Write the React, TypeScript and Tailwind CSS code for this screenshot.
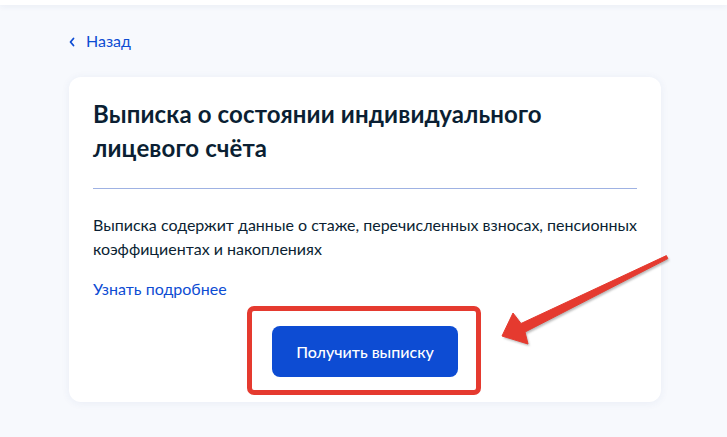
import React from "react";

export default function App() {
  const arrow =
    "502,336 513,313 521,323.5 666.4,255.6 667.8,258.6 525,332 528,344";
  return (
    <div
      className="relative w-[727px] h-[437px] overflow-hidden bg-[#f7f9fd] text-[#0b1f33]"
      style={{ fontFamily: "Lato, 'Noto Sans', sans-serif" }}
    >
      <div className="h-[5px] bg-white shadow-[0_1px_6px_rgba(40,60,120,0.08)]" />
      <div className="pl-[68px] pt-[24px]">
        <a className="flex items-center gap-[10px] text-[#0d4cd3] text-[16px] leading-[24px] h-[24px]">
          <svg width="8" height="10" viewBox="0 0 8 10" className="mt-[1px]">
            <path d="M5.5 1.5 L2.5 5 L5.5 8.5" fill="none" stroke="#0d4cd3" strokeWidth="1.8" strokeLinecap="round" strokeLinejoin="round" />
          </svg>
          <span>Назад</span>
        </a>
      </div>
      <div className="ml-[69px] mt-[24px] w-[592px] rounded-[12px] bg-white shadow-[0_1px_8px_rgba(40,70,140,0.07)] px-[24px] pt-[20px] pb-[25px]">
        <h1 className="text-[24px] leading-[34px] font-bold tracking-[0.13px]">
          Выписка о состоянии индивидуального
          <br />
          лицевого счёта
        </h1>
        <div className="mt-[23px] h-px bg-[#9fb2e3]" />
        <p className="mt-[24px] text-[16px] leading-[24px]">
          Выписка содержит данные о стаже, перечисленных взносах, пенсионных
          коэффициентах и накоплениях
        </p>
        <a className="block mt-[16px] text-[16px] leading-[24px] text-[#0d4cd3]">
          Узнать подробнее
        </a>
        <div className="mt-[25px] flex justify-center">
          <button className="w-[186px] h-[51px] rounded-[8px] bg-[#0d4cd3] text-white text-[16px] font-medium">
            Получить выписку
          </button>
        </div>
      </div>
      <div className="absolute left-[247px] top-[306px] w-[234px] h-[89px] border-[5px] border-[#e53a2f] rounded-[7px]" />
      <svg className="absolute left-0 top-0 pointer-events-none" width="727" height="437">
        <defs>
          <filter id="b" x="-10%" y="-10%" width="120%" height="120%">
            <feGaussianBlur stdDeviation="0.8" />
          </filter>
        </defs>
        <polygon points={arrow} fill="#9a9a9a" opacity="0.7" transform="translate(1.5,2)" filter="url(#b)" strokeLinejoin="round" />
        <polygon points={arrow} fill="#e53a2f" stroke="#e53a2f" strokeWidth="1" strokeLinejoin="round" />
      </svg>
    </div>
  );
}
